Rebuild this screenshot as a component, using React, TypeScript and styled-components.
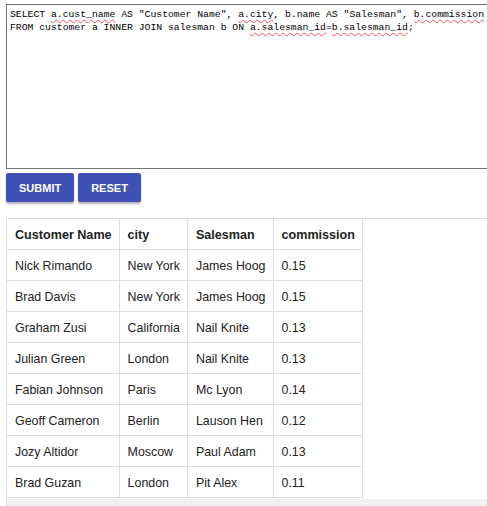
import React from "react";
import styled, { createGlobalStyle } from "styled-components";

const Global = createGlobalStyle`
  html, body { margin: 0; padding: 0; background: #fff; }
  body { overflow: hidden; width: 487px; height: 506px; }
`;

const Page = styled.div`
  padding: 4px 0 0 6px;
  width: 540px;
`;

const Editor = styled.div`
  box-sizing: border-box;
  width: 540px;
  height: 165px;
  border: 1px solid #767676;
  padding: 3px 3px;
  font-family: "Liberation Mono", "DejaVu Sans Mono", monospace;
  font-size: 9.75px;
  line-height: 13px;
  color: #000;
  white-space: pre;
`;

const Misspelt = styled.span`
  text-decoration: underline wavy #e55;
  text-decoration-thickness: 1px;
  text-underline-offset: 2px;
`;

const Actions = styled.div`
  display: flex;
  gap: 4px;
  margin-top: 4px;
`;

const Button = styled.button`
  height: 29px;
  padding: 0 13px;
  border: none;
  border-radius: 2px;
  background: #3f51b5;
  color: #fff;
  font-family: "Liberation Sans", Arial, sans-serif;
  font-weight: bold;
  font-size: 11px;
  text-transform: uppercase;
  box-shadow: 0 2px 2px rgba(0, 0, 0, 0.3);
  cursor: pointer;
`;

const ResultBox = styled.div`
  margin-top: 16px;
  border-top: 1px solid #ddd;
  border-left: 1px solid #ddd;
  width: 540px;
`;

const Table = styled.table`
  border-collapse: collapse;
  font-family: "Liberation Sans", Arial, sans-serif;
  color: #222;
`;

const Th = styled.th`
  border: 1px solid #ddd;
  border-top: none;
  border-left: none;
  padding: 8px 7px 7px 8px;
  height: 15px;
  text-align: left;
  font-weight: bold;
  font-size: 12.6px;
  white-space: nowrap;
`;

const Td = styled.td`
  border: 1px solid #ddd;
  border-left: none;
  padding: 8px 7px 7px 8px;
  height: 15px;
  font-size: 12.4px;
  white-space: nowrap;
`;

const ScrollTrack = styled.div`
  height: 8px;
  background: #f0f0f0;
  width: 540px;
  margin-top: 1px;
`;

const rows = [
  ["Nick Rimando", "New York", "James Hoog", "0.15"],
  ["Brad Davis", "New York", "James Hoog", "0.15"],
  ["Graham Zusi", "California", "Nail Knite", "0.13"],
  ["Julian Green", "London", "Nail Knite", "0.13"],
  ["Fabian Johnson", "Paris", "Mc Lyon", "0.14"],
  ["Geoff Cameron", "Berlin", "Lauson Hen", "0.12"],
  ["Jozy Altidor", "Moscow", "Paul Adam", "0.13"],
  ["Brad Guzan", "London", "Pit Alex", "0.11"],
];

const headers = ["Customer Name", "city", "Salesman", "commission"];

export default function App() {
  return (
    <>
      <Global />
      <Page>
        <Editor>
          {"SELECT "}
          <Misspelt>a.cust_name</Misspelt>
          {' AS "Customer Name", '}
          <Misspelt>a.city</Misspelt>
          {', b.name AS "Salesman", '}
          <Misspelt>b.commission</Misspelt>
          {"\nFROM customer a INNER JOIN salesman b ON "}
          <Misspelt>a.salesman_id</Misspelt>
          {"="}
          <Misspelt>b.salesman_id</Misspelt>
          {";"}
        </Editor>
        <Actions>
          <Button>Submit</Button>
          <Button>Reset</Button>
        </Actions>
        <ResultBox>
          <Table>
            <thead>
              <tr>
                {headers.map((h) => (
                  <Th key={h}>{h}</Th>
                ))}
              </tr>
            </thead>
            <tbody>
              {rows.map((r, i) => (
                <tr key={i}>
                  {r.map((c, j) => (
                    <Td key={j}>{c}</Td>
                  ))}
                </tr>
              ))}
            </tbody>
          </Table>
          <ScrollTrack />
        </ResultBox>
      </Page>
    </>
  );
}
